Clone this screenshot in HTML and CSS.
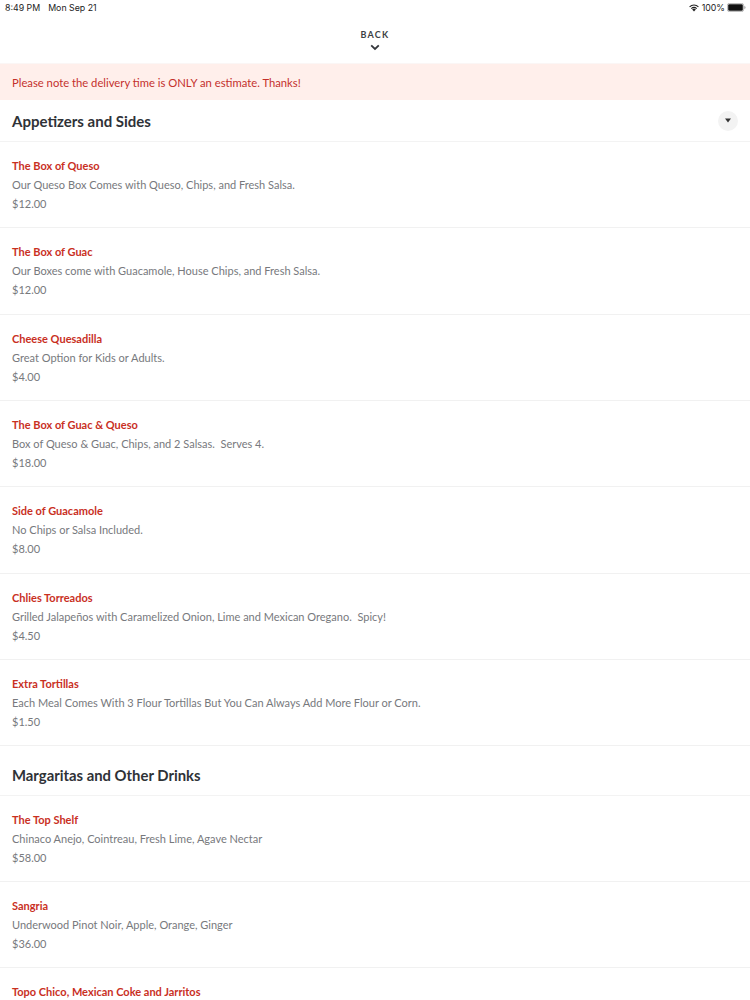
FILE: index.html
```html
<!DOCTYPE html>
<html lang="en">
<head>
<meta charset="utf-8">
<title>Menu</title>
<link rel="stylesheet" href="styles.css">
</head>
<body>
<div class="status">
  <div class="status-left"><span>8:49 PM</span><span>Mon Sep 21</span></div>
  <div class="status-right">
    <svg class="wifi" viewBox="0 0 14 10"><path d="M7 9.600 4.900 7.300a3 3 0 0 1 4.200 0Z" fill="#222"/><path d="M3.400 5.800a5.200 5.200 0 0 1 7.200 0l-.9 1a3.900 3.900 0 0 0-5.400 0Z" fill="#222"/><path d="M1.400 3.700a8 8 0 0 1 11.200 0l-.9 1a6.700 6.700 0 0 0-9.400 0Z" fill="#222"/></svg>
    <span>100%</span>
    <svg class="battery" viewBox="0 0 19 9"><rect x=".4" y=".4" width="16.200" height="8.200" rx="2" fill="none" stroke="#999" stroke-width=".7"/><rect x="1.200" y="1.200" width="14.600" height="6.600" rx="1.200" fill="#111"/><path d="M17.400 3v3c.7-.2 1.100-.8 1.100-1.500s-.4-1.300-1.100-1.500Z" fill="#999"/></svg>
  </div>
</div>
<header class="back">
  <span class="back-label">BACK</span>
  <svg class="back-icon" viewBox="0 0 10 7"><path d="M1.200 1.300 5 5l3.800-3.700" fill="none" stroke="#33363b" stroke-width="1.800"/></svg>
</header>
<div class="notice">Please note the delivery time is ONLY an estimate. Thanks!</div>
<main>
  <section>
    <div class="section-head">
      <h2>Appetizers and Sides</h2>
      <span class="toggle"><svg viewBox="0 0 6 5"><path d="M0 .5h6L3 4.500Z" fill="#333"/></svg></span>
    </div>
    <article class="item"><h3>The Box of Queso</h3><p>Our Queso Box Comes with Queso, Chips, and Fresh Salsa.</p><p>$12.00</p></article>
    <article class="item"><h3>The Box of Guac</h3><p>Our Boxes come with Guacamole, House Chips, and Fresh Salsa.</p><p>$12.00</p></article>
    <article class="item"><h3>Cheese Quesadilla</h3><p>Great Option for Kids or Adults.</p><p>$4.00</p></article>
    <article class="item"><h3>The Box of Guac &amp; Queso</h3><p>Box of Queso &amp; Guac, Chips, and 2 Salsas.&nbsp; Serves 4.</p><p>$18.00</p></article>
    <article class="item"><h3>Side of Guacamole</h3><p>No Chips or Salsa Included.</p><p>$8.00</p></article>
    <article class="item"><h3>Chlies Torreados</h3><p>Grilled Jalapeños with Caramelized Onion, Lime and Mexican Oregano.&nbsp; Spicy!</p><p>$4.50</p></article>
    <article class="item"><h3>Extra Tortillas</h3><p>Each Meal Comes With 3 Flour Tortillas But You Can Always Add More Flour or Corn.</p><p>$1.50</p></article>
  </section>
  <section>
    <div class="section-head section-head-next">
      <h2>Margaritas and Other Drinks</h2>
    </div>
    <article class="item"><h3>The Top Shelf</h3><p>Chinaco Anejo, Cointreau, Fresh Lime, Agave Nectar</p><p>$58.00</p></article>
    <article class="item"><h3>Sangria</h3><p>Underwood Pinot Noir, Apple, Orange, Ginger</p><p>$36.00</p></article>
    <article class="item item-cut"><h3>Topo Chico, Mexican Coke and Jarritos</h3></article>
  </section>
</main>
</body>
</html>
```

FILE: styles.css
```css
* { box-sizing: border-box; }
html, body { margin: 0; height: 1000px; overflow: hidden; background: #fff; }
body { font-family: Lato, "Open Sans", sans-serif; }
.status { height: 15px; display: flex; justify-content: space-between; align-items: center; padding: 0 4px 1px 5px; font-family: Inter, "Liberation Sans", sans-serif; font-size: 8.800px; color: #222; }
.status-left { display: flex; gap: 8px; }
.status-right { display: flex; align-items: center; gap: 2px; }
.wifi { width: 12px; height: 9px; }
.battery { width: 19px; height: 9px; }
.back { height: 49px; display: flex; flex-direction: column; align-items: center; padding-top: 14px; border-bottom: 1px solid #fbf6f5; }
.back-label { font-size: 9px; line-height: 12px; font-weight: 700; letter-spacing: 1.300px; color: #3c3f44; }
.back-icon { width: 10px; height: 7px; margin-top: 3px; }
.notice { height: 36px; display: flex; align-items: center; padding-left: 12px; background: #ffefeb; color: #c4302b; font-size: 11.260px; }
.section-head { height: 42px; display: flex; align-items: center; justify-content: space-between; padding: 0 12px; border-bottom: 1px solid #f3f3f3; }
.section-head-next { height: 49.500px; padding-top: 8px; }
h2 { margin: 0; font-size: 15px; font-weight: 700; color: #2f3237; }
.section-head-next h2 { font-size: 14.850px; }
.toggle { width: 20px; height: 20px; border-radius: 50%; background: #f3f3f3; display: flex; align-items: center; justify-content: center; }
.toggle svg { width: 6px; height: 5px; }
.item { height: 86.330px; padding: 13.900px 12px 0; border-bottom: 1px solid #f1f1f1; }
.item-cut { height: 33px; border-bottom: 0; }
h3 { margin: 0; font-size: 11px; line-height: 19px; font-weight: 700; color: #c9301f; }
.item p { margin: 0; font-size: 11px; line-height: 19px; color: #77797d; }
```
